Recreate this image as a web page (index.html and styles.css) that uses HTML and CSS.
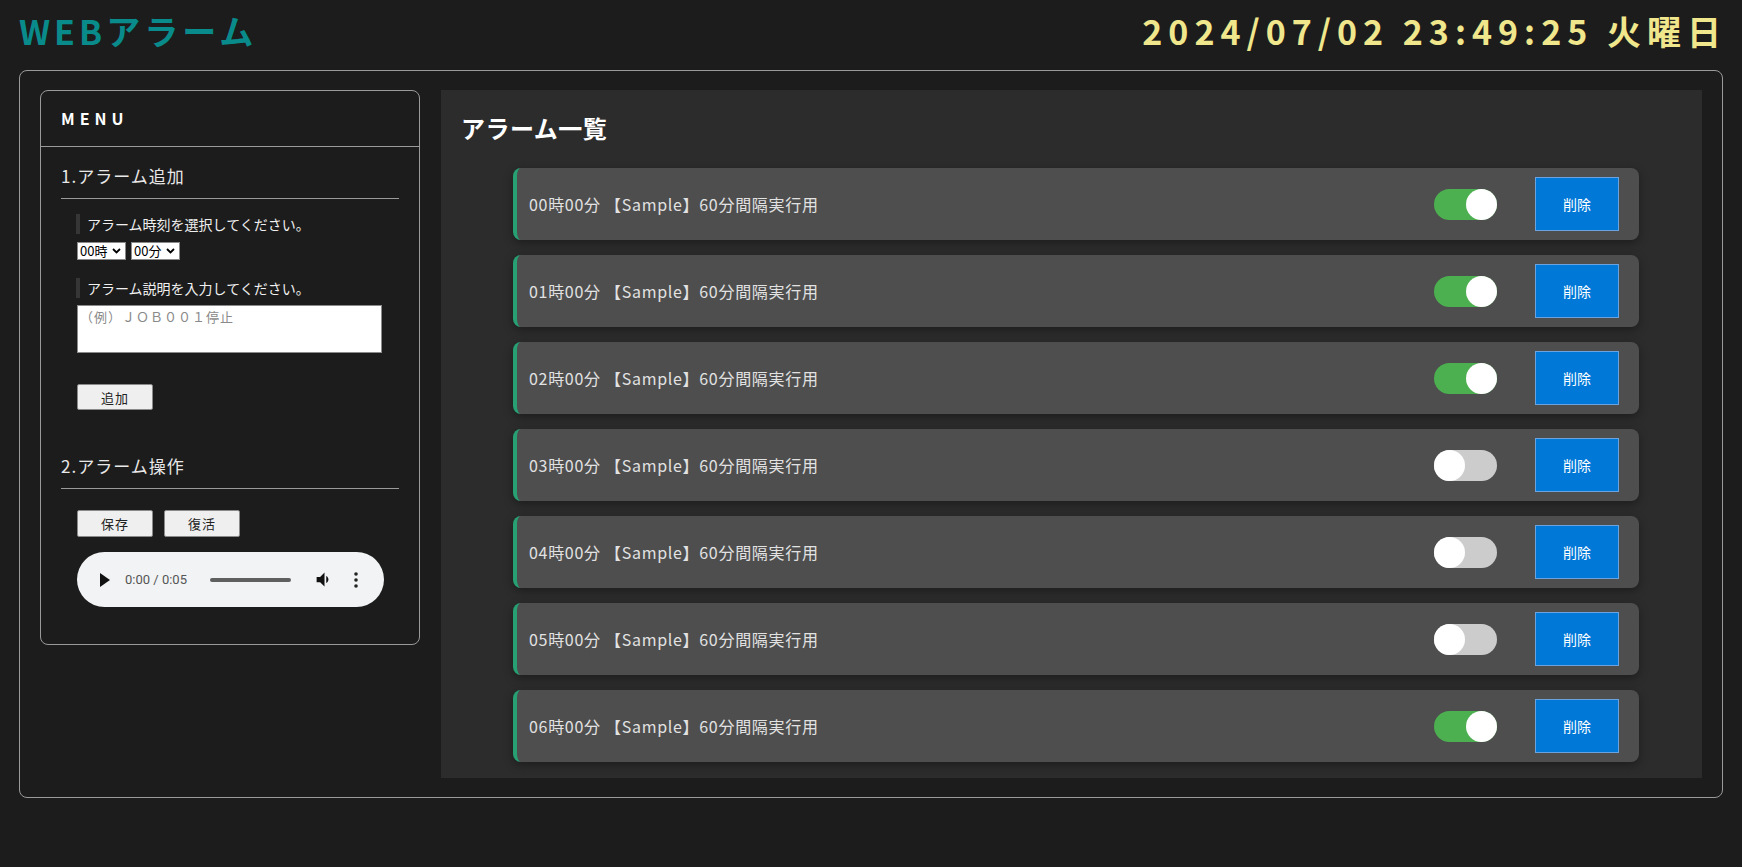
FILE: index.html
```html
<!DOCTYPE html>
<html lang="ja">
<head>
<meta charset="utf-8">
<title>WEBアラーム</title>
<link rel="stylesheet" href="styles.css">
</head>
<body>
<header class="top">
  <h1 class="logo">WEBアラーム</h1>
  <div class="clock">2024/07/02 23:49:25 火曜日</div>
</header>
<main class="frame">
  <aside class="menu">
    <div class="menu-head">MENU</div>
    <div class="menu-body">
      <h2 class="sec-title">1.アラーム追加</h2>
      <p class="label">アラーム時刻を選択してください。</p>
      <div class="selects">
        <select class="sel"><option>00時</option><option>01時</option><option>02時</option></select>
        <select class="sel"><option>00分</option><option>10分</option><option>20分</option></select>
      </div>
      <p class="label label2">アラーム説明を入力してください。</p>
      <textarea class="desc" placeholder="（例）ＪＯＢ００１停止"></textarea>
      <button class="btn add">追加</button>
      <h2 class="sec-title sec2">2.アラーム操作</h2>
      <div class="btns">
        <button class="btn">保存</button>
        <button class="btn">復活</button>
      </div>
      <div class="player">
        <svg class="p-play" width="10" height="14" viewBox="0 0 10 14"><polygon points="0,0 10,7 0,14" fill="#111"/></svg>
        <span class="p-time">0:00 / 0:05</span>
        <span class="p-bar"></span>
        <svg class="p-vol" width="21" height="21" viewBox="0 0 24 24"><path d="M3 9v6h4l5 5V4L7 9H3zm13.5 3c0-1.77-1.02-3.29-2.5-4.03v8.05c1.48-.73 2.5-2.250 2.5-4.02z" fill="#111"/></svg>
        <svg class="p-more" width="4" height="16" viewBox="0 0 4 16"><circle cx="2" cy="2" r="1.8" fill="#222"/><circle cx="2" cy="8" r="1.8" fill="#222"/><circle cx="2" cy="14" r="1.8" fill="#222"/></svg>
      </div>
    </div>
  </aside>
  <section class="panel">
    <h2 class="panel-title">アラーム一覧</h2>
    <ul class="alarms">
      <li class="alarm"><span class="a-text">00時00分 【Sample】60分間隔実行用</span><span class="toggle on"><span class="knob"></span></span><button class="del">削除</button></li>
      <li class="alarm"><span class="a-text">01時00分 【Sample】60分間隔実行用</span><span class="toggle on"><span class="knob"></span></span><button class="del">削除</button></li>
      <li class="alarm"><span class="a-text">02時00分 【Sample】60分間隔実行用</span><span class="toggle on"><span class="knob"></span></span><button class="del">削除</button></li>
      <li class="alarm"><span class="a-text">03時00分 【Sample】60分間隔実行用</span><span class="toggle"><span class="knob"></span></span><button class="del">削除</button></li>
      <li class="alarm"><span class="a-text">04時00分 【Sample】60分間隔実行用</span><span class="toggle"><span class="knob"></span></span><button class="del">削除</button></li>
      <li class="alarm"><span class="a-text">05時00分 【Sample】60分間隔実行用</span><span class="toggle"><span class="knob"></span></span><button class="del">削除</button></li>
      <li class="alarm"><span class="a-text">06時00分 【Sample】60分間隔実行用</span><span class="toggle on"><span class="knob"></span></span><button class="del">削除</button></li>
    </ul>
  </section>
</main>
</body>
</html>
```
FILE: styles.css
```css
* { box-sizing: border-box; }
html, body { background: #1c1c1c; }
body {
  margin: 0;
  padding: 0 19px;
  font-family: "Noto Sans CJK JP", "Noto Sans", sans-serif;
  color: #e6e6e6;
}
.top {
  height: 70px;
  padding-bottom: 8px;
  display: flex;
  align-items: center;
  justify-content: space-between;
}
.logo {
  margin: 0;
  font-size: 34px;
  font-weight: 700;
  letter-spacing: 4px;
  color: #0a8b8b;
  line-height: 1;
}
.clock {
  font-size: 34px;
  font-weight: 700;
  letter-spacing: 6px;
  color: #f0e68c;
  line-height: 1;
  margin-right: -4px;
}
.frame {
  border: 1px solid #9a9a9a;
  border-radius: 8px;
  padding: 19px 20px;
  display: flex;
  align-items: flex-start;
  gap: 21px;
}
.menu {
  width: 380px;
  flex: none;
  border: 1px solid #9a9a9a;
  border-radius: 8px;
}
.menu-head {
  height: 56px;
  line-height: 55px;
  padding-left: 20px;
  border-bottom: 1px solid #9a9a9a;
  font-size: 16px;
  font-weight: 700;
  letter-spacing: 5px;
  color: #fff;
}
.menu-body {
  padding: 0 20px 37px;
}
.sec-title {
  margin: 17px 0 0;
  font-size: 17px;
  font-weight: 400;
  letter-spacing: 1px;
  line-height: 24px;
  padding-bottom: 10px;
  border-bottom: 1px solid #9a9a9a;
  color: #e8e8e8;
}
.sec2 { margin-top: 44px; }
.label {
  margin: 15px 0 0 15px;
  height: 20px;
  line-height: 20px;
  border-left: 4px solid #363636;
  padding-left: 7px;
  font-size: 14px;
  color: #f0f0f0;
}
.label2 { margin-top: 18px; }
.selects {
  margin: 8px 0 0 16px;
  display: flex;
  gap: 5px;
}
.sel {
  appearance: none;
  -webkit-appearance: none;
  height: 18px;
  width: 49px;
  border: 1px solid #8a8a8a;
  border-radius: 0;
  background: #fff url("data:image/svg+xml;utf8,<svg xmlns='http://www.w3.org/2000/svg' width='9' height='6' viewBox='0 0 9 6'><path d='M1 1l3.5 3.5L8 1' fill='none' stroke='black' stroke-width='1.8'/></svg>") no-repeat right 4px center;
  padding: 0 0 0 2px;
  font-family: "Noto Sans CJK JP", sans-serif;
  font-size: 13px;
  line-height: 16px;
  color: #000;
}
.desc {
  display: block;
  margin: 7px 0 0 16px;
  width: 305px;
  height: 48px;
  border: 1px solid #8a8a8a;
  border-radius: 0;
  background: #fff;
  resize: none;
  padding: 1px 2px;
  font-family: "Noto Sans CJK JP", sans-serif;
  font-size: 13px;
}
.desc::placeholder { color: #8a8a8a; letter-spacing: 1px; }
.btn {
  width: 76px;
  height: 26px;
  background: #efefef;
  border: 1px solid #8a8a8a;
  border-radius: 2px;
  font-family: "Noto Sans CJK JP", sans-serif;
  font-size: 13px;
  letter-spacing: 1px;
  color: #222;
  padding: 0;
}
.add { display: block; margin: 31px 0 0 16px; }
.btns {
  margin: 21px 0 0 16px;
  display: flex;
  gap: 11px;
}
.btns .btn { height: 27px; }
.player {
  margin: 15px 0 0 16px;
  width: 307px;
  height: 55px;
  border-radius: 28px;
  background: #f1f3f4;
  display: flex;
  align-items: center;
  padding-left: 23px;
}
.p-play { flex: none; }
.p-time {
  margin-left: 15px;
  width: 70px;
  font-family: Roboto, sans-serif;
  font-size: 13px;
  color: #555;
}
.p-bar {
  margin-left: 15px;
  width: 81px;
  height: 4px;
  border-radius: 2px;
  background: #5f5f5f;
}
.p-vol { margin-left: 23px; flex: none; }
.p-more { margin-left: 19px; flex: none; }
.panel {
  flex: 1;
  background: #2c2c2c;
  padding: 22px 20px 16px;
}
.panel-title {
  margin: 0;
  font-size: 24px;
  font-weight: 700;
  line-height: 32px;
  color: #fff;
  letter-spacing: 0.5px;
}
.alarms {
  list-style: none;
  margin: 24px 43px 0 52px;
  padding: 0;
  display: flex;
  flex-direction: column;
  gap: 15px;
}
.alarm {
  height: 72px;
  background: #4e4e4e;
  border-left: 4px solid #27a074;
  border-radius: 8px;
  box-shadow: 0 3px 10px rgba(0, 0, 0, 0.35);
  display: flex;
  align-items: center;
  padding: 0 20px 0 12px;
}
.a-text {
  flex: 1;
  font-size: 16px;
  letter-spacing: 0.7px;
  color: #e2e2e2;
}
.toggle {
  width: 63px;
  height: 31px;
  border-radius: 16px;
  background: #cccccc;
  display: flex;
  justify-content: flex-start;
  margin-right: 38px;
}
.toggle.on {
  background: #4caf50;
  justify-content: flex-end;
}
.knob {
  width: 31px;
  height: 31px;
  border-radius: 50%;
  background: #fff;
}
.del {
  width: 84px;
  height: 54px;
  background: #0078d7;
  border: 1px solid #6aa3de;
  border-radius: 0;
  color: #fff;
  font-family: "Noto Sans CJK JP", sans-serif;
  font-size: 14px;
  padding: 0;
}
```
